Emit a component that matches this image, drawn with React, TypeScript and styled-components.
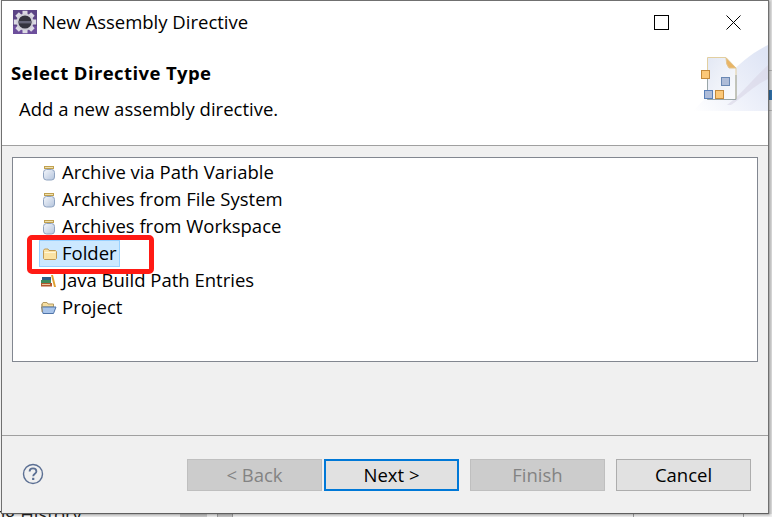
import React from 'react';
import styled, { createGlobalStyle } from 'styled-components';

const GlobalStyle = createGlobalStyle`
  html, body {
    margin: 0;
    padding: 0;
    background: #ffffff;
    overflow: hidden;
  }
  body {
    font-family: 'Open Sans', 'Noto Sans', 'Liberation Sans', sans-serif;
    color: #000000;
  }
`;

const Screen = styled.div`
  position: relative;
  width: 772px;
  height: 517px;
  overflow: hidden;
  background: #f4f4f4;
`;

const Backdrop = styled.div`
  position: absolute;
  left: 0;
  top: 502px;
  font-size: 18.5px;
  line-height: 24px;
  white-space: nowrap;
  color: #222222;
  text-indent: -6px;
`;

// bits of the window behind the dialog, visible along the right and bottom edge
const BehindRight = styled.div`
  position: absolute;
  left: 769px;
  top: 0;
  width: 3px;
  height: 517px;
  background: linear-gradient(#dcdcdc 0 70px, #b0b0b0 70px 71px, #d8d8d8 71px 90px, #2f6ea5 90px 100px, #d8d8d8 100px 110px, #b0b0b0 110px 111px, #d8d8d8 111px);
`;

const BehindBottom = styled.div`
  position: absolute;
  left: 80px;
  top: 514px;
  width: 692px;
  height: 3px;
  background: linear-gradient(90deg, #e8e8e8 0 100px, #c4c4c4 100px 127px, #e8e8e8 127px 137px, #9a9a9a 137px 138px, #c4c4c4 138px 152px, #9a9a9a 152px 153px, #ececec 153px 553px, #9a9a9a 553px 554px, #ececec 554px 663px, #9a9a9a 663px 664px, #ececec 664px);
`;

const Window = styled.div`
  position: relative;
  margin-left: 1px;
  width: 768px;
  height: 514px;
  box-sizing: border-box;
  border: 1px solid #707070;
  border-bottom-color: #5f5f5f;
  background: #f0f0f0;
  display: flex;
  flex-direction: column;
  box-shadow: 1px 1px 2px rgba(0, 0, 0, 0.3);
`;

const Header = styled.div`
  position: relative;
  height: 144px;
  flex: none;
  background: #ffffff;
  border-bottom: 1px solid #a0a0a0;
  box-sizing: content-box;
`;

const TitleBar = styled.div`
  display: flex;
  align-items: center;
  height: 42px;
  padding-left: 11px;
`;

const TitleText = styled.span`
  margin: 0 0 2px 5px;
  font-size: 18.5px;
`;

const WindowControls = styled.div`
  margin-left: auto;
  display: flex;
  align-items: center;
  gap: 57px;
  padding-right: 27px;
`;

const Banner = styled.div`
  position: absolute;
  right: 0;
  top: 44px;
`;

const HeaderTitle = styled.div`
  margin: 18px 0 0 9px;
  font-size: 18.5px;
  line-height: 24px;
  font-weight: 700;
  letter-spacing: 0.4px;
`;

const HeaderMessage = styled.div`
  margin: 12px 0 0 17px;
  font-size: 18.5px;
  line-height: 24px;
`;

const Body = styled.div`
  flex: 1;
  padding: 11px 10px 0 10px;
`;

const Tree = styled.div`
  height: 205px;
  box-sizing: border-box;
  padding-top: 1px;
  background: #ffffff;
  border: 1px solid #828790;
`;

const TreeRow = styled.div`
  display: flex;
  align-items: center;
  height: 27px;
  padding-left: 29px;
`;

const TreeIcon = styled.svg`
  flex: none;
`;

const TreeLabel = styled.span`
  margin-bottom: 2px;
  font-size: 18.5px;
  line-height: 25px;
`;

const SelectedItem = styled.div`
  display: flex;
  align-items: center;
  height: 27px;
  box-sizing: border-box;
  margin-left: -3px;
  padding: 0 2px 0 3px;
  background: #cce8ff;
  border: 1px solid #99d1ff;
`;

const Callout = styled.div`
  position: absolute;
  left: 25px;
  top: 234px;
  width: 127px;
  height: 39px;
  box-sizing: border-box;
  border: 5px solid #ff1a14;
  border-radius: 5px;
`;

const Footer = styled.div`
  height: 78px;
  flex: none;
  box-sizing: border-box;
  border-top: 1px solid #a0a0a0;
  display: flex;
  align-items: flex-start;
  padding: 23px 17px 0 20px;
`;

const HelpButton = styled.svg`
  margin-top: 4px;
`;

const ButtonRow = styled.div`
  margin-left: auto;
  display: flex;
`;

const DialogButton = styled.button<{ $variant?: 'disabled' | 'default' }>`
  width: 135px;
  height: 32px;
  box-sizing: border-box;
  margin: 0;
  padding: 0 0 1px;
  font-family: inherit;
  font-size: 18.5px;
  border-radius: 0;
  color: ${(p) => (p.$variant === 'disabled' ? '#838383' : '#000000')};
  background: ${(p) => (p.$variant === 'disabled' ? '#cccccc' : '#e1e1e1')};
  border: ${(p) =>
    p.$variant === 'disabled'
      ? '1px solid #bfbfbf'
      : p.$variant === 'default'
        ? '2px solid #0078d7'
        : '1px solid #adadad'};
`;

const Gap = styled.div<{ $w: number }>`
  width: ${(p) => p.$w}px;
`;

const EclipseGear = () => {
  const teeth = Array.from({ length: 8 }, (_, i) => i * 45);
  return (
    <svg width="24" height="24" viewBox="0 0 24 24">
      <rect width="24" height="24" fill="#5c4585" />
      <rect x="0" y="16" width="24" height="8" fill="#6d4f9c" />
      {teeth.map((a) => (
        <rect key={a} x="9.5" y="0.8" width="5" height="5" fill="#dcdae4" transform={`rotate(${a} 12 12)`} />
      ))}
      <circle cx="12" cy="12" r="8.6" fill="#cfced8" />
      <circle cx="12" cy="12" r="6.6" fill="#34343f" />
      <rect x="5.8" y="11" width="12.4" height="2.4" fill="#66667a" />
    </svg>
  );
};

const Jar = () => (
  <TreeIcon width="14" height="16" viewBox="0 0 14 16" style={{ marginRight: 6 }}>
    <defs>
      <linearGradient id="jarGlass" x1="0" y1="0" x2="1" y2="1">
        <stop offset="0" stopColor="#f4f7fc" />
        <stop offset="1" stopColor="#b4c4dc" />
      </linearGradient>
    </defs>
    <rect x="2.5" y="1.5" width="9" height="2" fill="#f0e2ae" stroke="#c0a050" strokeWidth="1" />
    <rect x="1.5" y="4.5" width="11" height="10.5" rx="3" fill="url(#jarGlass)" stroke="#8fa3c0" />
  </TreeIcon>
);

const FolderIcon = () => (
  <TreeIcon width="14" height="14" viewBox="0 0 14 14" style={{ marginRight: 5 }}>
    <path d="M0.5 3.5 L1.5 2 H5 L6 3.5 H12.5 L13.5 4.5 V11.5 L12.5 12.5 H1.5 L0.5 11.5 Z" fill="#fbe3a4" stroke="#c09a55" />
    <path d="M1.5 5.5 H12.5" stroke="#fff6d8" />
  </TreeIcon>
);

const BooksIcon = () => (
  <TreeIcon width="15" height="14" viewBox="0 0 15 14" style={{ marginLeft: -1, marginRight: 6 }}>
    <path d="M10 1 L12 1 L15 13 L13 13 Z" fill="#e0a030" />
    <rect x="1" y="3" width="9" height="3" fill="#2d5f88" />
    <rect x="0" y="6" width="10" height="3" fill="#3d8a5c" />
    <rect x="0" y="9" width="11" height="3.5" fill="#b4552d" />
    <rect x="1" y="10" width="8" height="1" fill="#e5c9a0" />
  </TreeIcon>
);

const OpenFolderIcon = () => (
  <TreeIcon width="16" height="14" viewBox="0 0 16 14" style={{ marginLeft: -1, marginRight: 5 }}>
    <path d="M1 3 L2 1.5 H6 L7 3 H12.5 V6 H1 Z" fill="#f6dea0" stroke="#b39a63" />
    <path d="M0.5 6 H15 L12.5 12.5 H2 Z" fill="#a8c4ea" stroke="#4f74a8" />
    <path d="M1 3 V11" stroke="#b39a63" />
  </TreeIcon>
);

const BannerArt = () => (
  <svg width="75" height="66" viewBox="0 0 75 66" style={{ display: 'block' }}>
    <defs>
      <linearGradient id="wash" x1="0" y1="1" x2="1" y2="0.2">
        <stop offset="0" stopColor="#ffffff" />
        <stop offset="0.5" stopColor="#eef1fa" />
        <stop offset="1" stopColor="#dfe5f5" />
      </linearGradient>
      <linearGradient id="sheet" x1="0" y1="0" x2="1" y2="1">
        <stop offset="0" stopColor="#e3e8f4" />
        <stop offset="1" stopColor="#fbfcfe" />
      </linearGradient>
    </defs>
    <path d="M0 66 C22 44 46 14 75 0 V66 Z" fill="url(#wash)" />
    <path d="M34 60 C46 52 58 36 75 20 V34 C62 40 50 52 38 60 Z" fill="#d9d6e6" opacity="0.6" />
    <path d="M14.5 12.5 H33 L43 23 V53 Q43 54.5 41.5 54.5 H14.5 Z" fill="url(#sheet)" stroke="#e2cfa0" />
    <path d="M14.5 34 V54.5 H43 V30" fill="none" stroke="#9aa6a8" />
    <path d="M33 13 L43 23 L36 23 Q33 20 33 13 Z" fill="#e9b566" stroke="#e3c48c" />
    <rect x="8.5" y="25.5" width="8" height="8" fill="#fcc878" stroke="#c48a3c" strokeWidth="1" />
    <rect x="28.5" y="32.5" width="8" height="8" fill="#aebcd8" stroke="#6a88b4" strokeWidth="1" />
    <rect x="11.5" y="45.5" width="8" height="8" fill="#aebcd8" stroke="#5a80b8" strokeWidth="1" />
    <rect x="22.5" y="45.5" width="8" height="8" fill="#fcc878" stroke="#c48a3c" strokeWidth="1" />
  </svg>
);

const rows = ['Archive via Path Variable', 'Archives from File System', 'Archives from Workspace'];

const App: React.FC = () => {
  return (
    <Screen>
      <GlobalStyle />
      <BehindRight />
      <BehindBottom />
      <Backdrop>ng History</Backdrop>
      <Window>
        <Header>
          <TitleBar>
            <EclipseGear />
            <TitleText>New Assembly Directive</TitleText>
            <WindowControls>
              <svg width="15" height="15" viewBox="0 0 15 15">
                <rect x="0.5" y="0.5" width="14" height="14" fill="none" stroke="#000000" />
              </svg>
              <svg width="15" height="15" viewBox="0 0 15 15">
                <path d="M0.5 0.5 L14.5 14.5 M14.5 0.5 L0.5 14.5" stroke="#000000" fill="none" />
              </svg>
            </WindowControls>
          </TitleBar>
          <Banner>
            <BannerArt />
          </Banner>
          <HeaderTitle>Select Directive Type</HeaderTitle>
          <HeaderMessage>Add a new assembly directive.</HeaderMessage>
        </Header>
        <Body>
          <Tree>
            {rows.map((label) => (
              <TreeRow key={label}>
                <Jar />
                <TreeLabel>{label}</TreeLabel>
              </TreeRow>
            ))}
            <TreeRow>
              <SelectedItem>
                <FolderIcon />
                <TreeLabel>Folder</TreeLabel>
              </SelectedItem>
            </TreeRow>
            <TreeRow>
              <BooksIcon />
              <TreeLabel>Java Build Path Entries</TreeLabel>
            </TreeRow>
            <TreeRow>
              <OpenFolderIcon />
              <TreeLabel>Project</TreeLabel>
            </TreeRow>
          </Tree>
        </Body>
        <Footer>
          <HelpButton width="22" height="22" viewBox="0 0 22 22">
            <circle cx="11" cy="11" r="9.5" fill="none" stroke="#5b6f93" strokeWidth="1.4" />
            <path d="M7.6 8.6 C7.6 6.4 9.2 5.4 11 5.4 C13 5.4 14.4 6.6 14.4 8.4 C14.4 10.6 11.2 10.8 11.2 13.2" fill="none" stroke="#5b6f93" strokeWidth="1.8" />
            <rect x="10.1" y="14.8" width="2.2" height="2.2" fill="#5b6f93" />
          </HelpButton>
          <ButtonRow>
            <DialogButton $variant="disabled" disabled>&lt; Back</DialogButton>
            <Gap $w={2} />
            <DialogButton $variant="default">Next &gt;</DialogButton>
            <Gap $w={11} />
            <DialogButton $variant="disabled" disabled>Finish</DialogButton>
            <Gap $w={11} />
            <DialogButton>Cancel</DialogButton>
          </ButtonRow>
        </Footer>
        <Callout />
      </Window>
    </Screen>
  );
};

export default App;
